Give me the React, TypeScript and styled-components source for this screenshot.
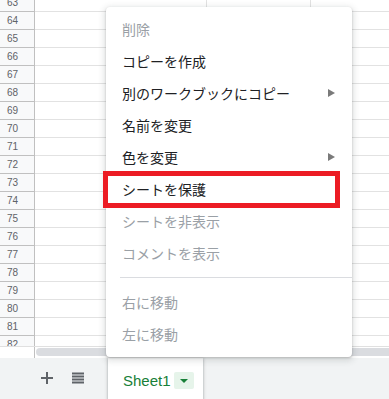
import React from "react";
import styled, { createGlobalStyle } from "styled-components";

const Global = createGlobalStyle`
  html, body { margin: 0; padding: 0; background: #fff; }
  body { width: 389px; height: 399px; overflow: hidden; font-family: "Liberation Sans", Arial, sans-serif; }
`;

const Page = styled.div`
  position: relative;
  width: 389px;
  height: 399px;
  display: flex;
  flex-direction: column;
  overflow: hidden;
`;

const GridArea = styled.div`
  height: 346px;
  overflow: hidden;
  flex: none;
`;

const Rows = styled.div`
  margin-top: -6px;
  display: flex;
  flex-direction: column;
`;

const Row = styled.div`
  display: flex;
  height: 18px;
  flex: none;
`;

const RowHeader = styled.div`
  width: 35px;
  flex: none;
  box-sizing: border-box;
  background: #f8f9fa;
  border-right: 1px solid #c0c0c0;
  border-bottom: 1px solid #c0c0c0;
  color: #5f6368;
  font-size: 10px;
  display: flex;
  align-items: center;
  padding-left: 7px;
`;

const Cell = styled.div<{ $w: number; $last?: boolean }>`
  width: ${(p) => p.$w}px;
  flex: ${(p) => (p.$last ? "1" : "none")};
  box-sizing: border-box;
  border-bottom: 1px solid #e2e2e2;
  border-right: ${(p) => (p.$last ? "none" : "1px solid #e2e2e2")};
`;

const ScrollRow = styled.div`
  height: 12px;
  flex: none;
  display: flex;
  box-sizing: border-box;
  border-top: 1px solid #e0e0e0;
`;

const ScrollCorner = styled.div`
  width: 35px;
  flex: none;
  box-sizing: border-box;
  border-right: 1px solid #c0c0c0;
  background: #fff;
`;

const Track = styled.div`
  flex: 1;
  padding: 1px 0 2px 1px;
  display: flex;
  background: #fff;
`;

const Thumb = styled.div`
  flex: 1;
  background: #dadce0;
  border-radius: 4px 0 0 4px;
`;

const BottomBar = styled.div`
  flex: 1;
  background: #f1f3f4;
  display: flex;
  align-items: stretch;
`;

const IconButton = styled.div<{ $ml: number }>`
  margin-left: ${(p) => p.$ml}px;
  width: 14px;
  display: flex;
  align-items: center;
  justify-content: center;
  padding-bottom: 2px;
`;

const Tab = styled.div`
  margin-left: 23px;
  width: 95px;
  background: #fff;
  box-shadow: 0 1px 3px 1px rgba(60, 64, 67, 0.15), 0 1px 2px rgba(60, 64, 67, 0.3);
  display: flex;
  align-items: center;
  padding-left: 15px;
  box-sizing: border-box;
  gap: 3px;
`;

const TabName = styled.span`
  color: #188038;
  font-size: 15px;
  font-family: "Liberation Sans", Arial, sans-serif;
  line-height: 1;
  margin-top: 4px;
`;

const TabDrop = styled.div`
  width: 20px;
  height: 17px;
  margin-top: 4px;
  background: #e6f4ea;
  border-radius: 2px;
  display: flex;
  align-items: center;
  justify-content: center;
  &::before {
    content: "";
    border-left: 4px solid transparent;
    border-right: 4px solid transparent;
    border-top: 4px solid #188038;
  }
`;

const Menu = styled.div`
  position: absolute;
  left: 106px;
  top: 7px;
  width: 246px;
  height: 350px;
  box-sizing: border-box;
  background: #fff;
  border-radius: 4px;
  box-shadow: 0 2px 6px 2px rgba(60, 64, 67, 0.15), 0 1px 2px rgba(60, 64, 67, 0.3);
  padding: 6px 0 8px;
  display: flex;
  flex-direction: column;
  font-family: "Noto Sans CJK JP", "Liberation Sans", sans-serif;
`;

const Item = styled.div<{ $disabled?: boolean; $marked?: boolean }>`
  position: relative;
  height: 32px;
  flex: none;
  display: flex;
  align-items: center;
  justify-content: space-between;
  padding: 0 16px;
  font-size: 14px;
  color: ${(p) => (p.$disabled ? "#9aa0a6" : "#202124")};
  ${(p) =>
    p.$marked
      ? `&::after {
    content: "";
    position: absolute;
    left: -3px;
    top: -2px;
    width: 237px;
    height: 37px;
    box-sizing: border-box;
    border: 5px solid #ec1c24;
  }`
      : ""}
`;

const SubArrow = styled.span`
  width: 0;
  height: 0;
  border-top: 4px solid transparent;
  border-bottom: 4px solid transparent;
  border-left: 7px solid #7a7a7a;
  margin-right: 1px;
`;

const Separator = styled.div`
  height: 1px;
  margin: 8px 0 8px 14px;
  background: #dadce0;
  flex: none;
`;

const cols = [
  { w: 172 },
  { w: 104 },
  { w: 78, last: true },
];

const rowNums = Array.from({ length: 20 }, (_, i) => 63 + i);

export default function App() {
  return (
    <Page>
      <Global />
      <GridArea>
        <Rows>
          {rowNums.map((n) => (
            <Row key={n}>
              <RowHeader>{n}</RowHeader>
              {cols.map((c, i) => (
                <Cell key={i} $w={c.w} $last={c.last} />
              ))}
            </Row>
          ))}
        </Rows>
      </GridArea>
      <ScrollRow>
        <ScrollCorner />
        <Track>
          <Thumb />
        </Track>
      </ScrollRow>
      <BottomBar>
        <IconButton $ml={40}>
          <svg width="12" height="12" viewBox="0 0 12 12">
            <path d="M5 0h2v5h5v2H7v5H5V7H0V5h5z" fill="#5f6368" />
          </svg>
        </IconButton>
        <IconButton $ml={17}>
          <svg width="12" height="12" viewBox="0 0 12 12">
            <path d="M0 0.5h12v2H0zM0 3.5h12v2H0zM0 6.5h12v2H0zM0 9.5h12v2H0z" fill="#5f6368" />
          </svg>
        </IconButton>
        <Tab>
          <TabName>Sheet1</TabName>
          <TabDrop />
        </Tab>
      </BottomBar>
      <Menu>
        <Item $disabled>削除</Item>
        <Item>コピーを作成</Item>
        <Item>
          別のワークブックにコピー
          <SubArrow />
        </Item>
        <Item>名前を変更</Item>
        <Item>
          色を変更
          <SubArrow />
        </Item>
        <Item $marked>シートを保護</Item>
        <Item $disabled>シートを非表示</Item>
        <Item $disabled>コメントを表示</Item>
        <Separator />
        <Item $disabled>右に移動</Item>
        <Item $disabled>左に移動</Item>
      </Menu>
    </Page>
  );
}
